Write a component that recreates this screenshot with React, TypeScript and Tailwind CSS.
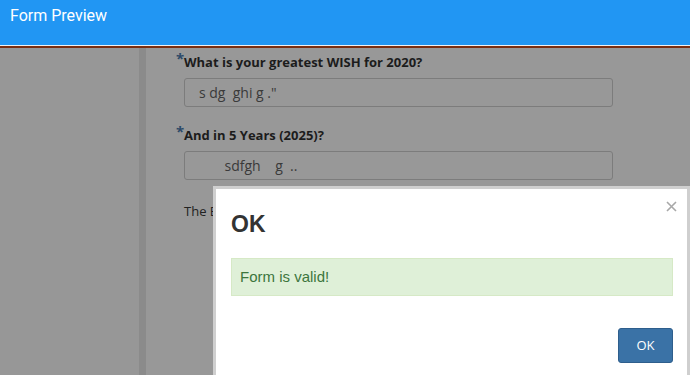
export default function App() {
  return (
    <div className="relative w-[690px] h-[375px] overflow-hidden bg-[#989898] font-['Open_Sans',sans-serif]">
      <header className="h-[45px] bg-[#2196f3] pl-[10px] pt-[6px] text-white text-[16px] leading-[20px] font-['Roboto',sans-serif]">
        Form Preview
      </header>
      <div className="h-px bg-[#f2f2f2]" />
      <div className="h-[2px] bg-[#7a2d10]" />
      <div className="flex h-[327px]">
        <div className="w-[139px] bg-[#979797]" />
        <div className="w-[7px] bg-[#8b8b8b]" />
        <div className="flex-1 pl-[30px] pt-[4px]">
          <div className="flex items-start">
            <span className="w-[8px] text-[15px] leading-[12px] text-[#2d4a68] font-bold">*</span>
            <span className="text-[13px] leading-[18px] font-bold text-[#1c1c1c] mt-[1px]">What is your greatest WISH for 2020?</span>
          </div>
          <div className="ml-[8px] mt-[7px] w-[429px] h-[29px] border border-[#7c7c7c] rounded-[3px] pl-[14px] flex items-center text-[14px] text-[#3a3a3a] whitespace-pre">
            s dg  ghi g ."
          </div>
          <div className="flex items-start mt-[18px]">
            <span className="w-[8px] text-[15px] leading-[12px] text-[#2d4a68] font-bold">*</span>
            <span className="text-[13px] leading-[18px] font-bold text-[#1c1c1c] mt-[1px]">And in 5 Years (2025)?</span>
          </div>
          <div className="ml-[8px] mt-[7px] w-[429px] h-[29px] border border-[#7c7c7c] rounded-[3px] pl-[14px] flex items-center text-[14px] text-[#3a3a3a] whitespace-pre">
            {"       sdfgh    g  .."}
          </div>
          <div className="ml-[8px] mt-[22px] text-[13px] leading-[18px] text-[#222]">The E</div>
        </div>
      </div>

      <div className="absolute left-[213px] top-[186px] w-[477px] h-[200px] bg-white border-[3px] border-[#cfcfcf] font-['Liberation_Sans',Arial,sans-serif]">
        <div className="relative px-[15px] pt-[20px]">
          <div className="text-[23px] leading-[30px] font-bold text-[#333]">OK</div>
          <svg className="absolute right-[10px] top-[12px]" width="11" height="11" viewBox="0 0 11 11">
            <path d="M1 1L10 10M10 1L1 10" stroke="#a8a8a8" strokeWidth="1.6" />
          </svg>
          <div className="mt-[19px] mr-[-1px] h-[38px] bg-[#dff0d8] border border-[#d6e9c6] pl-[8px] flex items-center text-[15px] text-[#3c763d]">
            Form is valid!
          </div>
          <div className="flex justify-end mt-[32px] mr-[-1px]">
            <button className="w-[55px] h-[35px] bg-[#3a72a6] border border-[#2e5e8c] rounded-[3px] text-white text-[13px] font-['Open_Sans',sans-serif]">
              OK
            </button>
          </div>
        </div>
      </div>
    </div>
  );
}
